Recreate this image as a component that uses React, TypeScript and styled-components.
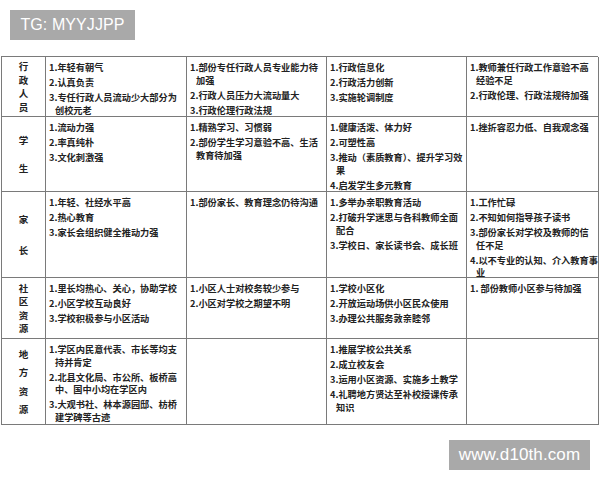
import React from 'react';
import styled, { createGlobalStyle } from 'styled-components';

const GlobalStyle = createGlobalStyle`
  html, body {
    margin: 0;
    padding: 0;
    background: #ffffff;
  }
  body {
    font-family: "Noto Sans CJK SC", "Noto Sans", sans-serif;
  }
`;

type Item = string | string[];

interface RowData {
  label: string;
  height: number;
  cells: Item[][];
}

const rows: RowData[] = [
  {
    label: '行政人员',
    height: 60,
    cells: [
      ['1.年轻有朝气', '2.认真负责', ['3.专任行政人员流动少大部分为', '创校元老']],
      [['1.部份专任行政人员专业能力待', '加强'], '2.行政人员压力大流动量大', '3.行政伦理行政法规'],
      ['1.行政信息化', '2.行政活力创新', '3.实施轮调制度'],
      [['1.教师兼任行政工作意验不高', '经验不足'], '2.行政伦理、行政法规待加强'],
    ],
  },
  {
    label: '学生',
    height: 75,
    cells: [
      ['1.流动力强', '2.率真纯朴', '3.文化刺激强'],
      ['1.精熟学习、习惯弱', ['2.部份学生学习意验不高、生活', '教育待加强']],
      ['1.健康活泼、体力好', '2.可塑性高', ['3.推动（素质教育）、提升学习效', '果'], '4.启发学生多元教育'],
      ['1.挫折容忍力低、自我观念强'],
    ],
  },
  {
    label: '家长',
    height: 86,
    cells: [
      ['1.年轻、社经水平高', '2.热心教育', '3.家长会组织健全推动力强'],
      ['1.部份家长、教育理念仍待沟通'],
      ['1.多举办亲职教育活动', ['2.打破升学迷思与各科教师全面', '配合'], '3.学校日、家长读书会、成长班'],
      [
        '1.工作忙碌',
        '2.不知如何指导孩子读书',
        ['3.部份家长对学校及教师的信', '任不足'],
        ['4.以不专业的认知、介入教育事', '业'],
      ],
    ],
  },
  {
    label: '社区资源',
    height: 61,
    cells: [
      ['1.里长均热心、关心，协助学校', '2.小区学校互动良好', '3.学校积极参与小区活动'],
      ['1.小区人士对校务较少参与', '2.小区对学校之期望不明'],
      ['1.学校小区化', '2.开放运动场供小区民众使用', '3.办理公共服务敦亲睦邻'],
      ['1. 部份教师小区参与待加强'],
    ],
  },
  {
    label: '地方资源',
    height: 86,
    cells: [
      [
        ['1.学区内民意代表、市长等均支', '持并肯定'],
        ['2.北县文化局、市公所、板桥高', '中、国中小均在学区内'],
        ['3.大观书社、林本源园邸、枋桥', '建学碑等古迹'],
      ],
      [],
      [
        '1.推展学校公共关系',
        '2.成立校友会',
        '3.运用小区资源、实施乡土教学',
        ['4.礼聘地方贤达至补校授课传承', '知识'],
      ],
      [],
    ],
  },
];

const Page = styled.div`
  position: relative;
  width: 600px;
  height: 480px;
  padding-top: 56px;
  box-sizing: border-box;
  overflow: hidden;
`;

const Watermark = styled.div<{ $corner: 'top' | 'bottom' }>`
  position: absolute;
  ${(p) => (p.$corner === 'top' ? 'left: 10px; top: 10px; width: 125px;' : 'left: 449px; top: 440px; width: 141px;')}
  height: 30px;
  background: #a9a9a9;
  color: #ffffff;
  font-family: "Liberation Sans", Arial, sans-serif;
  font-size: ${(p) => (p.$corner === 'top' ? '16px' : '17px')};
  display: flex;
  align-items: center;
  justify-content: center;
  letter-spacing: 0.1px;
`;

const Table = styled.div<{ $rows: string }>`
  margin-left: 1px;
  width: 597px;
  display: grid;
  grid-template-columns: 44px 141px 140px 140px 132px;
  grid-template-rows: ${(p) => p.$rows};
  border-top: 1px solid #7a7a7a;
  border-left: 1px solid #7a7a7a;
  box-sizing: border-box;
  color: #222222;
`;

const LabelCell = styled.div`
  border-right: 1px solid #7a7a7a;
  border-bottom: 1px solid #7a7a7a;
  display: flex;
  flex-direction: column;
  align-items: center;
  justify-content: space-evenly;
  padding: 2px 0;
  font-size: 9.5px;
  font-weight: 700;
  line-height: 12px;
`;

const Cell = styled.div`
  border-right: 1px solid #7a7a7a;
  border-bottom: 1px solid #7a7a7a;
  padding: 4px 1px 0 3px;
  overflow: hidden;
  display: flex;
  flex-direction: column;
  gap: 2.5px;
`;

const Entry = styled.div`
  font-size: 9.2px;
  font-weight: 700;
  line-height: 12.5px;
  white-space: nowrap;
`;

const Wrapped = styled.div`
  padding-left: 6px;
`;

const renderItem = (item: Item, key: number) => {
  const lines = Array.isArray(item) ? item : [item];
  return (
    <Entry key={key}>
      <div>{lines[0]}</div>
      {lines.slice(1).map((l, i) => (
        <Wrapped key={i}>{l}</Wrapped>
      ))}
    </Entry>
  );
};

const App: React.FC = () => {
  return (
    <>
      <GlobalStyle />
      <Page>
        <Table $rows={rows.map((r) => `${r.height}px`).join(' ')}>
          {rows.map((row, ri) => (
            <React.Fragment key={ri}>
              <LabelCell>
                {row.label.split('').map((ch, ci) => (
                  <span key={ci}>{ch}</span>
                ))}
              </LabelCell>
              {row.cells.map((cell, ci) => (
                <Cell key={ci}>{cell.map(renderItem)}</Cell>
              ))}
            </React.Fragment>
          ))}
        </Table>
        <Watermark $corner="top">TG: MYYJJPP</Watermark>
        <Watermark $corner="bottom">www.d10th.com</Watermark>
      </Page>
    </>
  );
};

export default App;
